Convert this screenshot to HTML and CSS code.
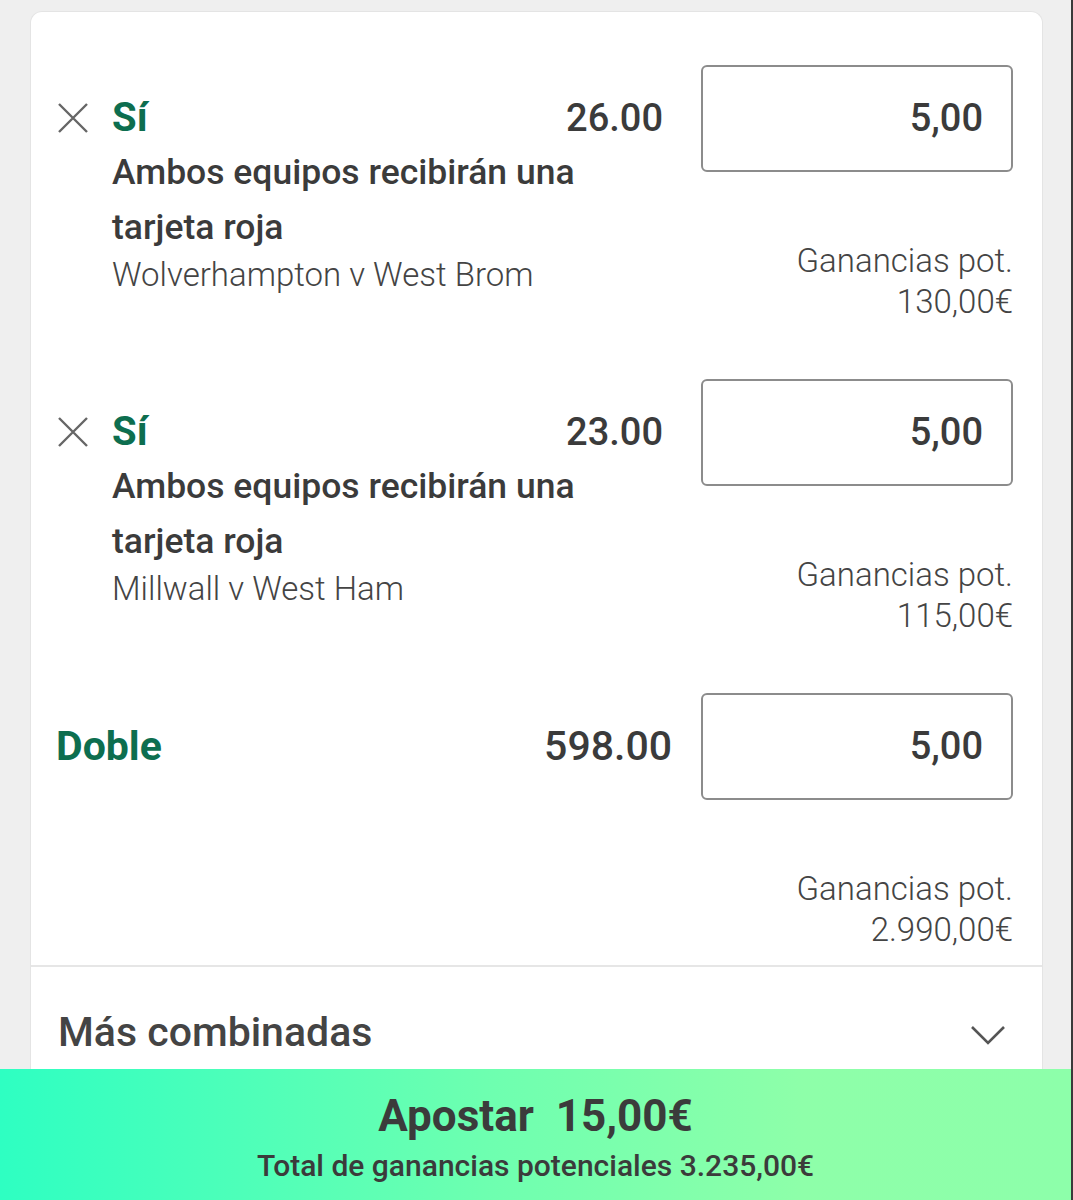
FILE: index.html
```html
<!DOCTYPE html>
<html>
<head>
    <title>Boleto</title>
    <link rel="stylesheet" href="styles.css">
</head>
    <body>
        <div class="slip">
            <div class="bet">
                <div class="selection">
                    <svg class="remove" width="30" height="30" viewBox="0 0 30 30">
                        <path d="M1 1 L29 29 M29 1 L1 29" stroke="#666" stroke-width="2.4" fill="none"/>
                    </svg>
                    <div class="details">
                        <div class="pick">Sí</div>
                        <div class="market">Ambos equipos recibirán una tarjeta roja</div>
                        <div class="event">Wolverhampton v West Brom</div>
                    </div>
                </div>
                <div class="odds">26.00</div>
                <div class="stake-col">
                    <div class="stake">5,00</div>
                    <div class="returns">Ganancias pot.<br>130,00€</div>
                </div>
            </div>

            <div class="bet">
                <div class="selection">
                    <svg class="remove" width="30" height="30" viewBox="0 0 30 30">
                        <path d="M1 1 L29 29 M29 1 L1 29" stroke="#666" stroke-width="2.4" fill="none"/>
                    </svg>
                    <div class="details">
                        <div class="pick">Sí</div>
                        <div class="market">Ambos equipos recibirán una tarjeta roja</div>
                        <div class="event">Millwall v West Ham</div>
                    </div>
                </div>
                <div class="odds">23.00</div>
                <div class="stake-col">
                    <div class="stake">5,00</div>
                    <div class="returns">Ganancias pot.<br>115,00€</div>
                </div>
            </div>

            <div class="bet bet-multi">
                <div class="selection">
                    <div class="details">
                        <div class="pick">Doble</div>
                    </div>
                </div>
                <div class="odds">598.00</div>
                <div class="stake-col">
                    <div class="stake">5,00</div>
                    <div class="returns">Ganancias pot.<br>2.990,00€</div>
                </div>
            </div>

            <div class="more">
                <span>Más combinadas</span>
                <svg width="36" height="22" viewBox="0 0 36 22">
                    <path d="M2 3 L18 19 L34 3" stroke="#555" stroke-width="2.6" fill="none"/>
                </svg>
            </div>
        </div>

        <div class="place-bet">
            <div class="place-title">Apostar&nbsp;&nbsp;15,00€</div>
            <div class="place-total">Total de ganancias potenciales 3.235,00€</div>
        </div>
    </body>
</html>
```

FILE: styles.css
```css
html {
    background: #efefef;
    border-right: 2px solid #3a3a3a;
}
body {
    margin: 0;
    padding: 11px 28px 0 30px;
    font-family: Roboto, "Liberation Sans", sans-serif;
    color: #3b3b3b;
}
.slip {
    background: #fff;
    border: 1px solid #e4e4e4;
    border-bottom: none;
    border-radius: 12px 12px 0 0;
    min-height: calc(100vh - 11px);
    box-sizing: border-box;
}
.bet {
    display: flex;
    align-items: flex-start;
    padding: 53px 29px 0 27px;
}
.bet + .bet {
    padding-top: 57px;
}
.selection {
    flex: 1;
    min-width: 0;
    display: flex;
    align-items: flex-start;
    padding-top: 25px;
}
.remove {
    flex: none;
    margin: 13px 24px 0 0;
}
.details {
    width: 470px;
    flex: none;
}
.pick {
    font-size: 40px;
    font-weight: 700;
    color: #0d6e4f;
    line-height: 55px;
}
.market {
    font-size: 35.5px;
    font-weight: 500;
    line-height: 55px;
}
.event {
    font-size: 33px;
    font-weight: 300;
    line-height: 40px;
    color: #444;
}
.odds {
    font-size: 38px;
    font-weight: 500;
    line-height: 107px;
    margin-right: 38px;
}
.stake-col {
    width: 312px;
    flex: none;
}
.stake {
    height: 107px;
    box-sizing: border-box;
    border: 2px solid #8c8c8c;
    border-radius: 6px;
    text-align: right;
    padding-right: 28px;
    font-size: 38px;
    font-weight: 500;
    line-height: 103px;
}
.returns {
    margin-top: 68px;
    text-align: right;
    font-size: 33px;
    font-weight: 300;
    line-height: 41px;
    color: #444;
}
.bet-multi .selection {
    padding-top: 0;
    margin-left: -2px;
}
.bet-multi .pick {
    font-size: 41px;
    line-height: 107px;
}
.bet-multi .odds {
    font-size: 41px;
    margin-right: 29px;
}
.more {
    margin-top: 15px;
    border-top: 2px solid #e6e6e6;
    display: flex;
    justify-content: space-between;
    align-items: center;
    padding: 41px 36px 0 27px;
    font-size: 41px;
    line-height: 48px;
    font-weight: 500;
    color: #444;
}
.more svg {
    margin-top: 6px;
}
.place-bet {
    position: fixed;
    left: 0;
    right: 0;
    bottom: 0;
    height: 131px;
    background: linear-gradient(to right, #2effc2, #6dffb0 45%, #8effa9 75%, #8dffaa);
    border-right: 2px solid #3a3a3a;
    text-align: center;
}
.place-title {
    margin-top: 21px;
    font-size: 44px;
    font-weight: 700;
    line-height: 52px;
}
.place-total {
    margin-top: 4px;
    font-size: 30px;
    font-weight: 500;
    line-height: 40px;
}
```
